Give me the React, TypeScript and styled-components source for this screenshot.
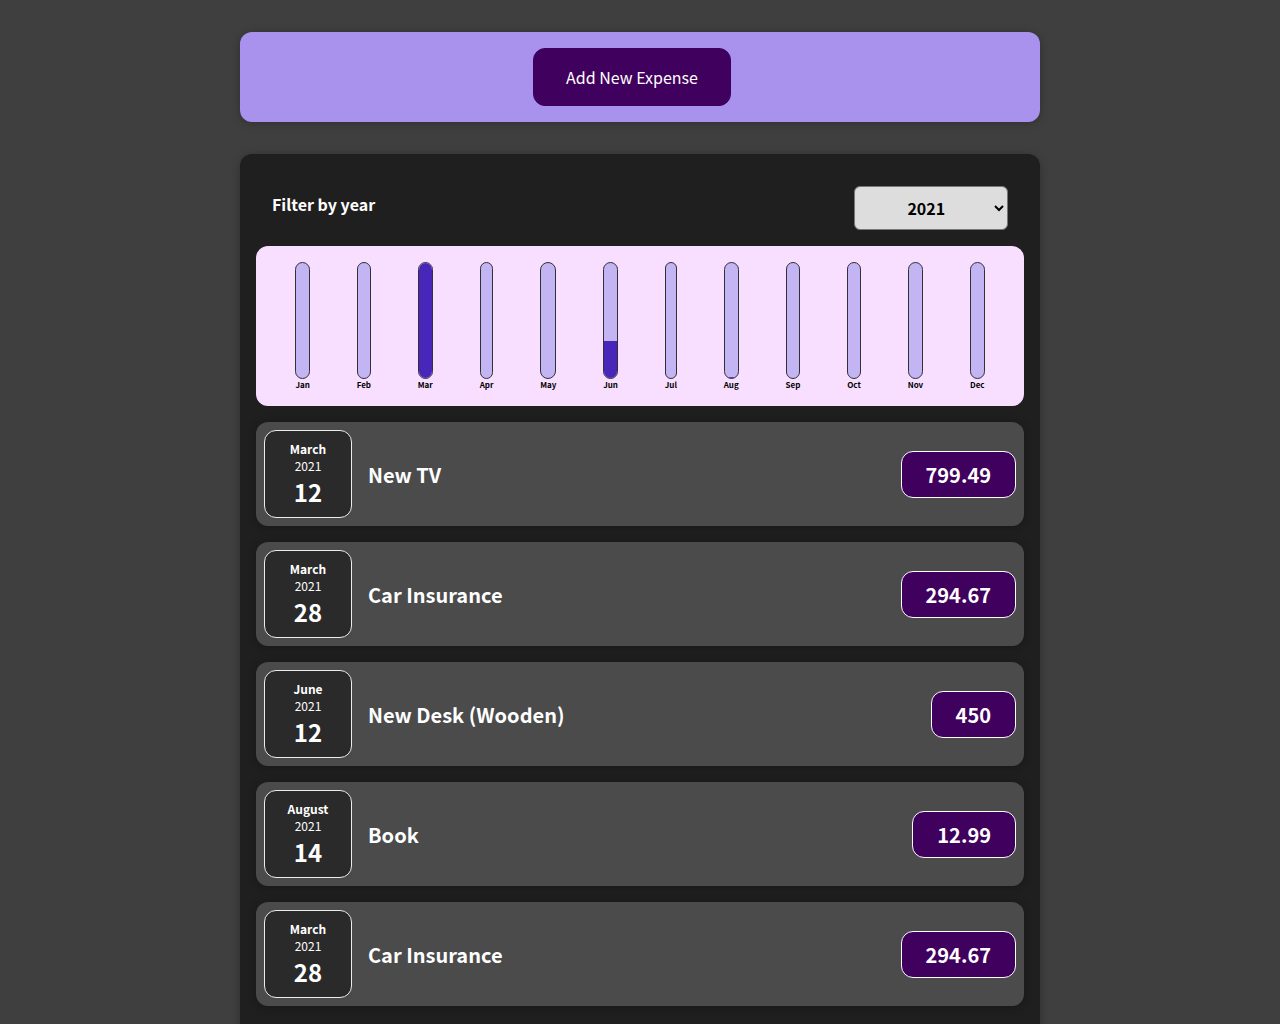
import React from "react";
import styled, { createGlobalStyle } from "styled-components";

const GlobalStyle = createGlobalStyle`
  * { box-sizing: border-box; }
  html { font-family: "Noto Sans CJK JP", "Noto Sans", sans-serif; }
  body { margin: 0; background-color: #3f3f3f; }
`;

type Expense = { id: string; title: string; amount: number; date: Date };

const expenses: Expense[] = [
  { id: "e2", title: "New TV", amount: 799.49, date: new Date(2021, 2, 12) },
  { id: "e3", title: "Car Insurance", amount: 294.67, date: new Date(2021, 2, 28) },
  { id: "e4", title: "New Desk (Wooden)", amount: 450, date: new Date(2021, 5, 12) },
  { id: "e5", title: "Book", amount: 12.99, date: new Date(2021, 7, 14) },
  { id: "e6", title: "Car Insurance", amount: 294.67, date: new Date(2021, 2, 28) },
];

const Card = styled.div`
  border-radius: 12px;
  box-shadow: 0 1px 8px rgba(0, 0, 0, 0.25);
`;

const NewExpense = styled(Card)`
  background-color: #a892ee;
  padding: 1rem;
  margin: 2rem auto;
  width: 50rem;
  max-width: 95%;
  text-align: center;
`;

const AddButton = styled.button`
  font: inherit;
  cursor: pointer;
  padding: 1rem 2rem;
  border: 1px solid #40005d;
  background-color: #40005d;
  color: white;
  border-radius: 12px;
  margin-right: 1rem;
`;

const Expenses = styled(Card)`
  padding: 1rem;
  background-color: rgb(31, 31, 31);
  margin: 2rem auto;
  width: 50rem;
  max-width: 95%;
`;

const Filter = styled.div`
  color: white;
  padding: 0 1rem;
`;

const FilterControl = styled.div`
  display: flex;
  width: 100%;
  align-items: center;
  justify-content: space-between;
  margin: 1rem 0;
`;

const FilterLabel = styled.label`
  font-weight: bold;
  margin-bottom: 0.5rem;
`;

const Select = styled.select`
  font: inherit;
  padding: 0.5rem 2.85rem 0.5rem 3rem;
  font-weight: bold;
  border-radius: 6px;
  background-color: #dddddd;
  border: 1px solid #767676;
  color: #000;
`;

const Chart = styled.div`
  padding: 1rem;
  border-radius: 12px;
  background-color: #f8dfff;
  text-align: center;
  display: flex;
  justify-content: space-around;
  height: 10rem;
`;

const ChartBar = styled.div`
  height: 100%;
  display: flex;
  flex-direction: column;
  align-items: center;
`;

const BarInner = styled.div`
  height: 100%;
  width: 100%;
  border: 1px solid #313131;
  border-radius: 12px;
  background-color: #c3b4f3;
  overflow: hidden;
  display: flex;
  flex-direction: column;
  justify-content: flex-end;
`;

const BarFill = styled.div`
  background-color: #4826b9;
  width: 100%;
`;

const BarLabel = styled.div`
  font-weight: bold;
  font-size: 0.5rem;
  text-align: center;
`;

const List = styled.ul`
  list-style: none;
  padding: 0;
  margin: 0;
`;

const Item = styled(Card).attrs({ as: "li" })`
  display: flex;
  justify-content: space-between;
  align-items: center;
  padding: 0.5rem;
  margin: 1rem 0;
  background-color: #4b4b4b;
`;

const Description = styled.div`
  display: flex;
  flex-direction: row;
  align-items: center;
  justify-content: flex-start;
  flex: 1;
`;

const Title = styled.h2`
  font-size: 1.25rem;
  flex: 1;
  margin: 0 1rem;
  color: white;
`;

const Price = styled.div`
  font-size: 1.25rem;
  font-weight: bold;
  color: white;
  background-color: #40005d;
  border: 1px solid white;
  padding: 0.5rem 1.5rem;
  border-radius: 12px;
`;

const DateBox = styled.div`
  display: flex;
  flex-direction: column;
  width: 5.5rem;
  height: 5.5rem;
  border: 1px solid #ececec;
  background-color: #2a2a2a;
  color: white;
  border-radius: 12px;
  align-items: center;
  justify-content: center;
`;

const Month = styled.div`
  font-size: 0.75rem;
  font-weight: bold;
`;

const Year = styled.div`
  font-size: 0.75rem;
`;

const Day = styled.div`
  font-size: 1.5rem;
  font-weight: bold;
`;

const months = ["Jan", "Feb", "Mar", "Apr", "May", "Jun", "Jul", "Aug", "Sep", "Oct", "Nov", "Dec"];

export default function App() {
  const values = months.map(() => 0);
  expenses.forEach((e) => {
    values[e.date.getMonth()] += e.amount;
  });
  const max = Math.max(...values);

  return (
    <>
      <GlobalStyle />
      <NewExpense>
        <AddButton>Add New Expense</AddButton>
      </NewExpense>
      <Expenses>
        <Filter>
          <FilterControl>
            <FilterLabel>Filter by year</FilterLabel>
            <Select defaultValue="2021">
              <option value="2022">2022</option>
              <option value="2021">2021</option>
              <option value="2020">2020</option>
              <option value="2019">2019</option>
            </Select>
          </FilterControl>
        </Filter>
        <Chart>
          {months.map((m, i) => (
            <ChartBar key={m}>
              <BarInner>
                <BarFill style={{ height: max > 0 ? Math.round((values[i] / max) * 100) + "%" : "0%" }} />
              </BarInner>
              <BarLabel>{m}</BarLabel>
            </ChartBar>
          ))}
        </Chart>
        <List>
          {expenses.map((e) => (
            <Item key={e.id}>
              <DateBox>
                <Month>{e.date.toLocaleString("en-US", { month: "long" })}</Month>
                <Year>{e.date.getFullYear()}</Year>
                <Day>{e.date.toLocaleString("en-US", { day: "2-digit" })}</Day>
              </DateBox>
              <Description>
                <Title>{e.title}</Title>
                <Price>{e.amount}</Price>
              </Description>
            </Item>
          ))}
        </List>
      </Expenses>
    </>
  );
}
